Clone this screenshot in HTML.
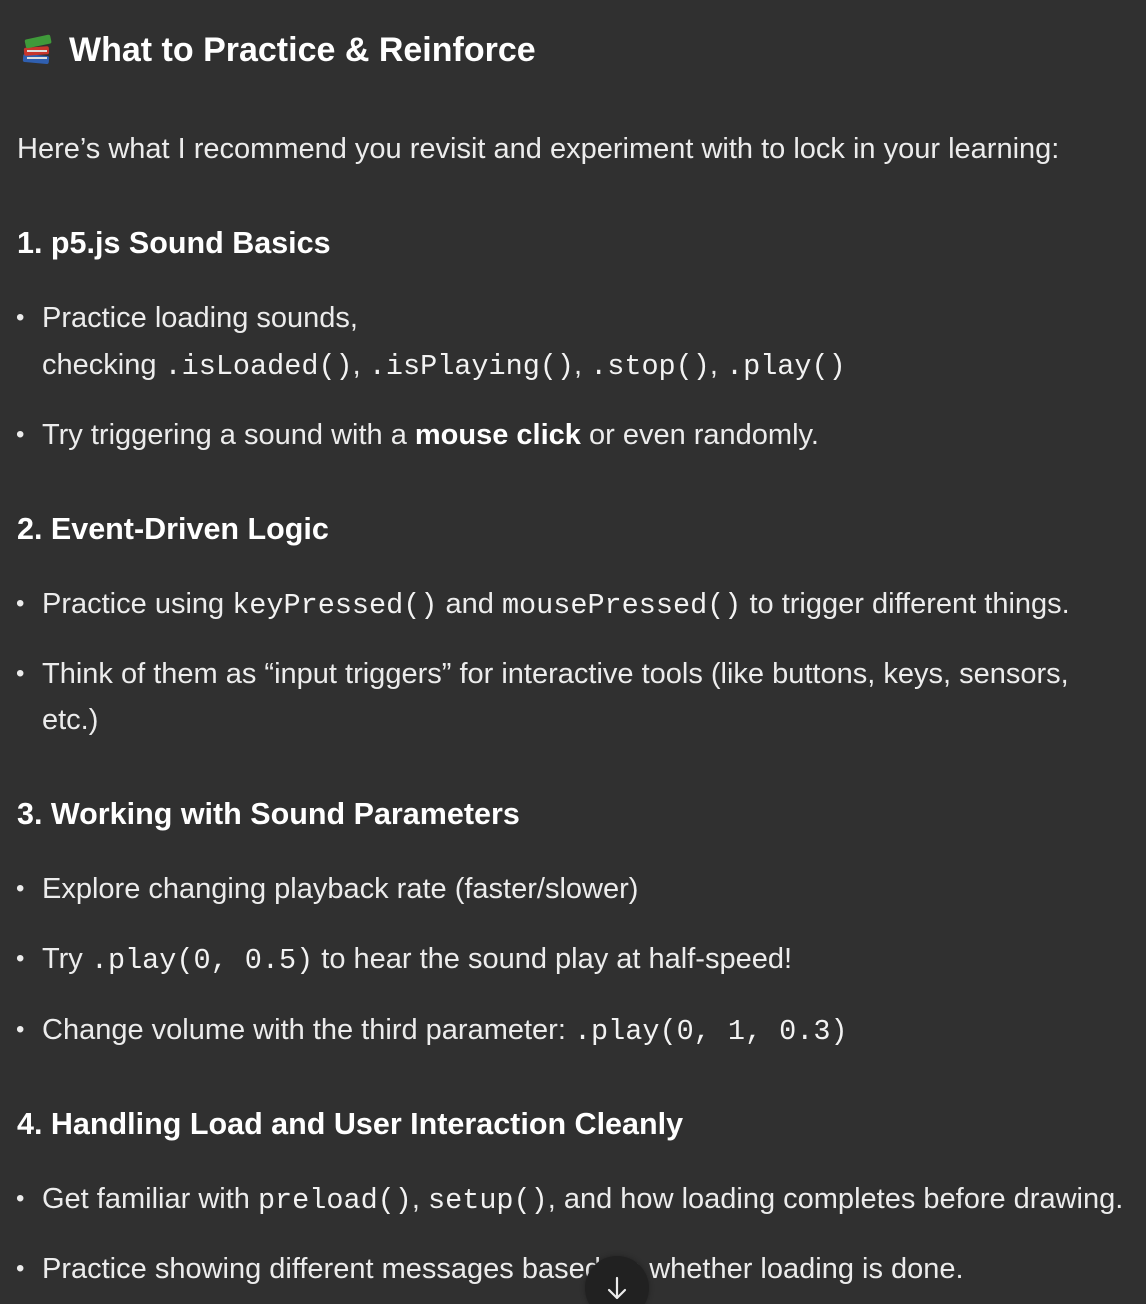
<!DOCTYPE html>
<html><head><meta charset="utf-8"><style>
html,body{margin:0;padding:0;background:#303030;width:1146px;height:1304px;overflow:hidden}
body{position:relative;color:#ececec;font-family:"Liberation Sans","DejaVu Sans",sans-serif;font-size:29px}
.l{position:absolute;left:17px;white-space:nowrap;line-height:34px}
.b{left:42px}
.b::before{content:"•";position:absolute;left:-26px;font-size:24px}
.nb::before{content:none}
.h{font-weight:bold;font-size:30.5px;color:#fff}
code{font-family:"Liberation Mono","DejaVu Sans Mono",monospace;font-size:28.5px;color:#f2f2f2}
strong{color:#fff}
.btn{position:absolute;left:585px;top:1256px;width:64px;height:64px;border-radius:50%;background:#212121;box-shadow:0 0 6px rgba(0,0,0,.3)}
</style></head><body>
<div class="l h" style="top:31px;font-size:34px;left:19px"><svg width="36" height="36" viewBox="0 0 36 36" style="vertical-align:-6px;margin-right:14px"><rect x="4" y="24" width="26" height="8" rx="2" fill="#2f5fb0" transform="rotate(5 17 28)"/><rect x="5" y="16" width="25" height="8" rx="2" fill="#c8362c" transform="rotate(-4 17 20)"/><rect x="6" y="6" width="26" height="9" rx="2" fill="#3f9a3a" transform="rotate(-12 19 10)"/><rect x="8" y="26" width="20" height="2" fill="#ddd"/><rect x="8" y="19" width="20" height="2" fill="#ddd"/></svg>What to Practice &amp; Reinforce</div>
<div class="l" style="top:132px">Here’s what I recommend you revisit and experiment with to lock in your learning:</div>
<div class="l h" style="top:226px">1. p5.js Sound Basics</div>
<div class="l b" style="top:301px">Practice loading sounds,</div>
<div class="l b nb" style="top:348px">checking <code>.isLoaded()</code>, <code>.isPlaying()</code>, <code>.stop()</code>, <code>.play()</code></div>
<div class="l b" style="top:418px">Try triggering a sound with a <strong>mouse click</strong> or even randomly.</div>
<div class="l h" style="top:512px">2. Event-Driven Logic</div>
<div class="l b" style="top:587px">Practice using <code>keyPressed()</code> and <code>mousePressed()</code> to trigger different things.</div>
<div class="l b" style="top:657px">Think of them as “input triggers” for interactive tools (like buttons, keys, sensors,</div>
<div class="l b nb" style="top:703px">etc.)</div>
<div class="l h" style="top:797px">3. Working with Sound Parameters</div>
<div class="l b" style="top:872px">Explore changing playback rate (faster/slower)</div>
<div class="l b" style="top:942px">Try <code>.play(0, 0.5)</code> to hear the sound play at half-speed!</div>
<div class="l b" style="top:1013px">Change volume with the third parameter: <code>.play(0, 1, 0.3)</code></div>
<div class="l h" style="top:1107px">4. Handling Load and User Interaction Cleanly</div>
<div class="l b" style="top:1182px">Get familiar with <code>preload()</code>, <code>setup()</code>, and how loading completes before drawing.</div>
<div class="l b" style="top:1252px">Practice showing different messages based on whether loading is done.</div>
<div class="btn"><svg width="64" height="64" viewBox="0 0 64 64"><path d="M32 22v20M24 34l8 8 8-8" stroke="#ececec" stroke-width="2.2" fill="none" stroke-linecap="round" stroke-linejoin="round"/></svg></div>
</body></html>
